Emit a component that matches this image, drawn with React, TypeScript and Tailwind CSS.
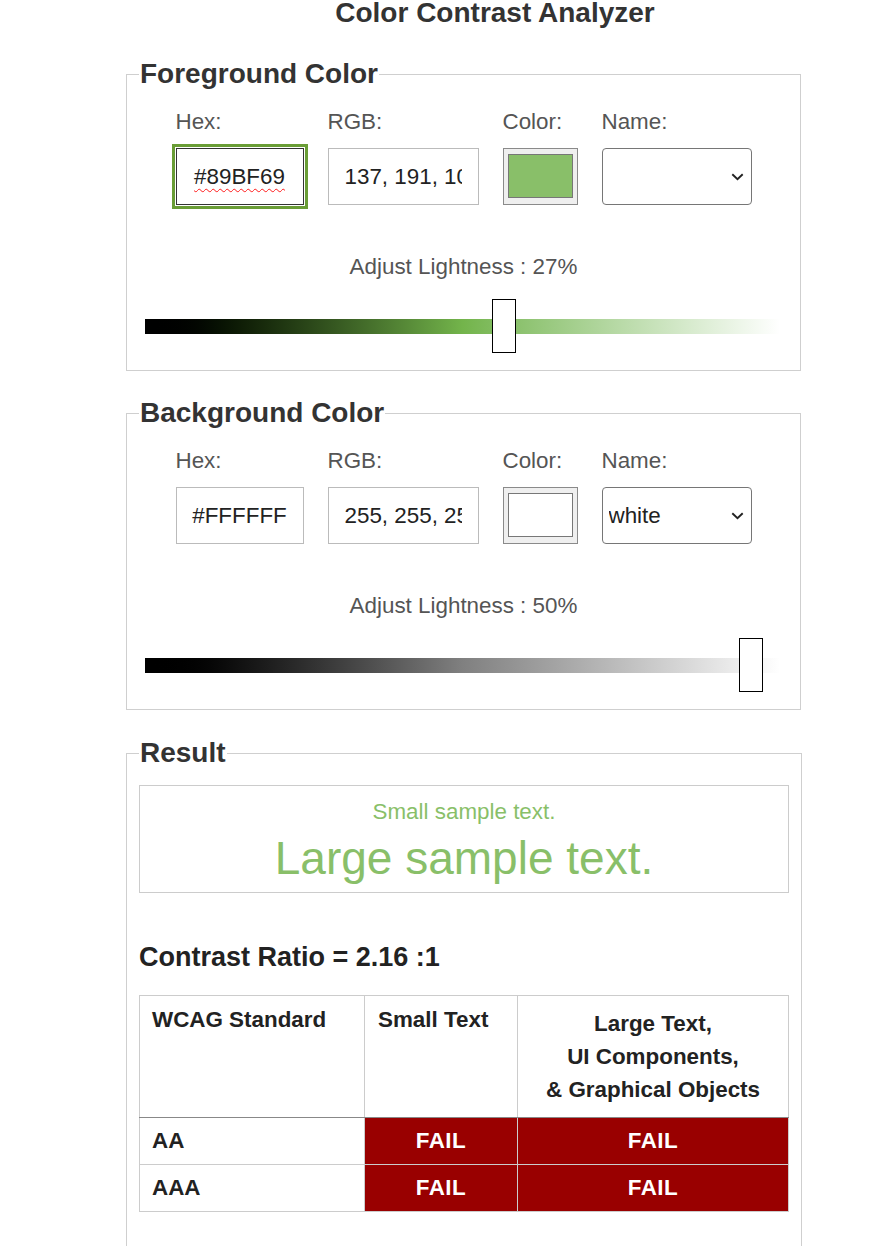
import React from 'react'

type PanelProps = {
  legend: string
  hex: string
  rgb: string
  swatch: string
  name: string
  lightness: string
  track: string
  thumb: string
  focused?: boolean
}

const ColorPanel = ({ legend, hex, rgb, swatch, name, lightness, track, thumb, focused }: PanelProps) => {
  return (
    <fieldset className="w-[675px] border border-[#cfcfcf] px-[12px] pb-[17px]">
      <legend className="px-[1px] text-[28px] leading-[32px] font-bold text-[#333]">{legend}</legend>

      <div className="flex justify-center gap-6 pt-[19px]">
        <div className="flex flex-col">
          <span className="leading-[26px] text-[#555]">Hex:</span>
          {focused ? (
            // focused field with the spellcheck squiggle
            <div
              role="textbox"
              className="mt-[13px] flex h-[57px] w-[128px] items-center justify-center border border-[#333] text-[#222] outline-[3px] outline-solid outline-offset-[1px] outline-[#6a9d36]"
            >
              <span className="underline decoration-wavy decoration-[#ff1a1a] decoration-[1px] underline-offset-[4px]">
                {hex}
              </span>
            </div>
          ) : (
            <input
              defaultValue={hex}
              className="mt-[13px] h-[57px] w-[128px] border border-[#bbb] px-[14px] text-center text-[#222] outline-none"
            />
          )}
        </div>
        <div className="flex flex-col">
          <span className="leading-[26px] text-[#555]">RGB:</span>
          <input
            defaultValue={rgb}
            className="mt-[13px] h-[57px] w-[151px] border border-[#bbb] px-[16px] text-[#222] outline-none"
          />
        </div>
        <div className="flex flex-col">
          <span className="leading-[26px] text-[#555]">Color:</span>
          <div className="mt-[13px] h-[57px] w-[75px] border border-[#8a8a8a] bg-[#efefef] px-[4px] pt-[5px] pb-[6px]">
            <div className={`h-full w-full border border-[#777] ${swatch}`} />
          </div>
        </div>
        <div className="flex flex-col">
          <span className="leading-[26px] text-[#555]">Name:</span>
          <div className="relative mt-[13px] h-[57px] w-[150px]">
            <select
              defaultValue={name}
              className="h-full w-full appearance-none rounded-[4px] border border-[#767676] bg-white pl-[6px] text-[#222] outline-none"
            >
              <option value={name}>{name}</option>
            </select>
            <svg
              className="pointer-events-none absolute right-[8px] top-[25px]"
              width="13"
              height="8"
              viewBox="0 0 13 8"
            >
              <path d="M1.3 1.3 6.5 6.2l5.2-4.9" fill="none" stroke="#222" strokeWidth="1.9" />
            </svg>
          </div>
        </div>
      </div>

      <p className="mt-[49px] text-center leading-[26px] text-[#555]">Adjust Lightness : {lightness}</p>

      <div className="relative mt-[19px] ml-[6px] flex h-[54px] w-[635px] items-center">
        <div className={`h-[15px] w-full ${track}`} />
        <div className={`absolute top-0 h-[54px] w-[24px] border border-black bg-white ${thumb}`} />
      </div>
    </fieldset>
  )
}

const FailCell = () => (
  <td className="border border-[#ccc] bg-[#990000] py-[10px] text-center leading-[26px] font-bold tracking-[0.5px] text-white">
    FAIL
  </td>
)

export default function App() {
  return (
    <div className="min-h-[1246px] bg-white font-['Liberation_Sans',Arial,sans-serif] text-[22.4px] text-[#222]">
      <h1 className="mt-[-3px] pl-[116px] text-center text-[28px] leading-[32px] font-bold text-[#333]">
        Color Contrast Analyzer
      </h1>

      <div className="ml-[126px] mt-[29px]">
        <ColorPanel
          legend="Foreground Color"
          hex="#89BF69"
          rgb="137, 191, 105"
          swatch="bg-[#89bf69]"
          name=""
          lightness="27%"
          track="bg-linear-to-r from-black via-[#73b44b] to-white"
          thumb="left-[347px]"
          focused
        />

        <div className="mt-[26px]">
          <ColorPanel
            legend="Background Color"
            hex="#FFFFFF"
            rgb="255, 255, 255"
            swatch="bg-white"
            name="white"
            lightness="50%"
            track="bg-linear-to-r from-black via-[#808080] to-white"
            thumb="left-[594px]"
          />
        </div>

        <fieldset className="mt-[27px] w-[675px] border border-[#cfcfcf] px-[12px] pb-[60px]">
          <legend className="px-[1px] text-[28px] leading-[32px] font-bold text-[#333]">Result</legend>

          <div className="mt-[16px] border border-[#ccc] pt-[13px] pb-[7px] text-center text-[#89bf69]">
            <p className="leading-[26px]">Small sample text.</p>
            <p className="mt-[7px] text-[46px] leading-[53px]">Large sample text.</p>
          </div>

          <p className="mt-[49px] text-[27px] leading-[31px] font-bold text-[#222]">Contrast Ratio = 2.16 :1</p>

          <table className="mt-[22px] w-[649px] table-fixed border-collapse text-[#222]">
            <colgroup>
              <col className="w-[225px]" />
              <col className="w-[153px]" />
              <col className="w-[271px]" />
            </colgroup>
            <thead>
              <tr>
                <th className="border border-[#ccc] border-b-[#888] px-[12px] py-[11px] text-left align-top leading-[26px] font-bold">
                  WCAG Standard
                </th>
                <th className="border border-[#ccc] border-b-[#888] px-[13px] py-[11px] text-left align-top leading-[26px] font-bold">
                  Small Text
                </th>
                <th className="border border-[#ccc] border-b-[#888] px-[12px] py-[11px] text-center align-top leading-[33px] font-bold">
                  Large Text,
                  <br />
                  UI Components,
                  <br />
                  &amp; Graphical Objects
                </th>
              </tr>
            </thead>
            <tbody>
              <tr>
                <td className="border border-[#ccc] px-[12px] py-[10px] leading-[26px] font-bold">AA</td>
                <FailCell />
                <FailCell />
              </tr>
              <tr>
                <td className="border border-[#ccc] px-[12px] py-[10px] leading-[26px] font-bold">AAA</td>
                <FailCell />
                <FailCell />
              </tr>
            </tbody>
          </table>
        </fieldset>
      </div>
    </div>
  )
}
